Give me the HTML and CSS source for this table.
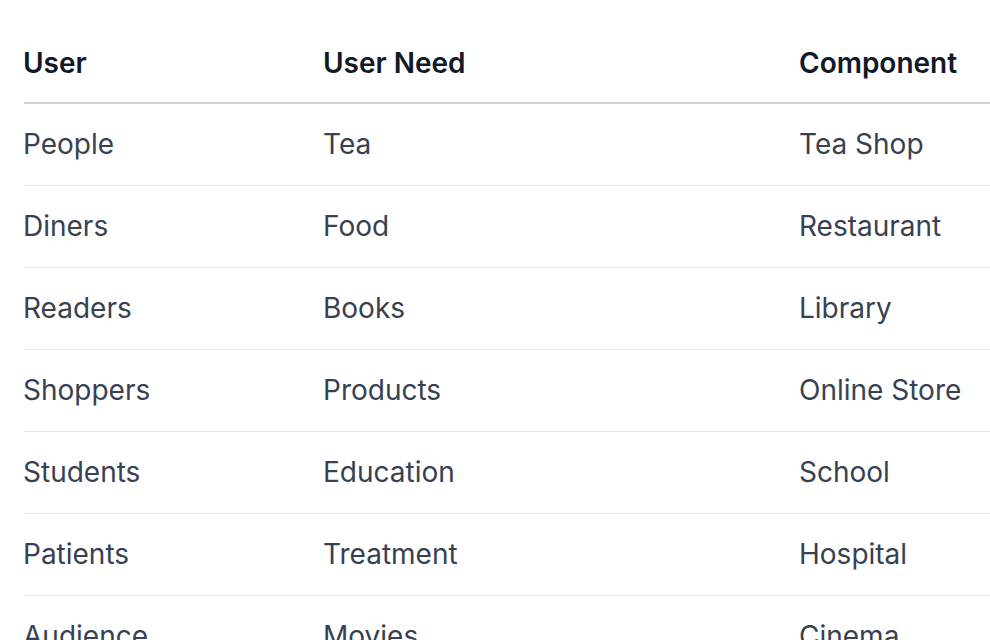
FILE: index.html
```html
<!DOCTYPE html>
<html lang="en">
<head>
<meta charset="utf-8">
<title>User Needs</title>
<link rel="stylesheet" href="styles.css">
</head>
<body>
<table class="needs">
  <colgroup>
    <col class="c1"><col class="c2"><col class="c3">
  </colgroup>
  <thead>
    <tr><th>User</th><th>User Need</th><th>Component</th></tr>
  </thead>
  <tbody>
    <tr><td>People</td><td>Tea</td><td>Tea Shop</td></tr>
    <tr><td>Diners</td><td>Food</td><td>Restaurant</td></tr>
    <tr><td>Readers</td><td>Books</td><td>Library</td></tr>
    <tr><td>Shoppers</td><td>Products</td><td>Online Store</td></tr>
    <tr><td>Students</td><td>Education</td><td>School</td></tr>
    <tr><td>Patients</td><td>Treatment</td><td>Hospital</td></tr>
    <tr><td>Audience</td><td>Movies</td><td>Cinema</td></tr>
  </tbody>
</table>
</body>
</html>
```
FILE: styles.css
```css
html, body {
  margin: 0;
  padding: 0;
  background: #ffffff;
  overflow: hidden;
}
body {
  font-family: Inter, "Liberation Sans", sans-serif;
  padding: 22px 0 0 24px;
}
.needs {
  border-collapse: collapse;
  table-layout: fixed;
  width: 966px;
  font-size: 28px;
}
.c1 { width: 300px; }
.c2 { width: 476px; }
.c3 { width: 190px; }
.needs th,
.needs td {
  text-align: left;
  text-indent: -1px;
  white-space: nowrap;
}
.needs th {
  font-weight: 600;
  color: #111827;
  padding: 2px 0 0 0;
  height: 78px;
  line-height: 78px;
  border-bottom: 2px solid #d1d5db;
}
.needs td {
  color: #374151;
  padding: 0;
  height: 81px;
  line-height: 81px;
}
.needs tbody tr {
  border-bottom: 1px solid #e5e7eb;
}
```
